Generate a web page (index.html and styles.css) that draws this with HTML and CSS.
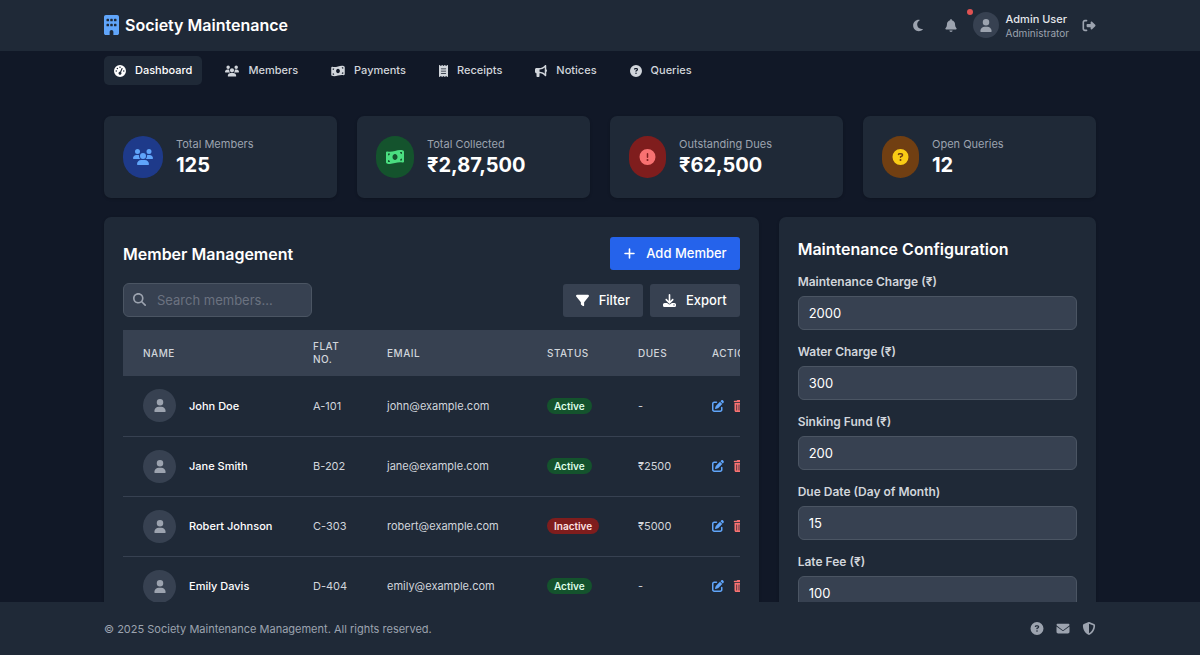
FILE: index.html
```html
<!DOCTYPE html>
<html lang="en">
  <head>
    <meta charset="UTF-8" />
    <meta name="viewport" content="width=device-width, initial-scale=1.0" />
    <title>Society Maintenance</title>
    <link rel="stylesheet" href="styles.css">
  </head>
  <body>
    <!-- Icon sprite -->
    <svg class="sprite" aria-hidden="true">
      <symbol id="i-building" viewBox="0 0 384 512"><path fill-rule="evenodd" d="M48 0C21.500 0 0 21.500 0 48V464c0 26.500 21.500 48 48 48h96V432c0-26.500 21.500-48 48-48s48 21.500 48 48v80h96c26.500 0 48-21.500 48-48V48c0-26.500-21.500-48-48-48H48zM80 96h32q16 0 16 16v32q0 16-16 16H80q-16 0-16-16v-32q0-16 16-16zM176 96h32q16 0 16 16v32q0 16-16 16h-32q-16 0-16-16v-32q0-16 16-16zM272 96h32q16 0 16 16v32q0 16-16 16h-32q-16 0-16-16v-32q0-16 16-16zM80 224h32q16 0 16 16v32q0 16-16 16H80q-16 0-16-16v-32q0-16 16-16zM176 224h32q16 0 16 16v32q0 16-16 16h-32q-16 0-16-16v-32q0-16 16-16zM272 224h32q16 0 16 16v32q0 16-16 16h-32q-16 0-16-16v-32q0-16 16-16z"/></symbol>
      <symbol id="i-moon" viewBox="0 0 384 512"><path d="M223.500 32C100 32 0 132.300 0 256S100 480 223.500 480c60.600 0 115.500-24.200 155.800-63.400c5-4.900 6.300-12.500 3.100-18.700s-10.100-9.700-17-8.500c-9.800 1.700-19.800 2.600-30.100 2.600c-96.900 0-175.500-78.800-175.500-176c0-65.800 36-123.100 89.300-153.300c6.100-3.500 9.200-10.500 7.700-17.300s-7.300-11.900-14.300-12.500c-6.300-.5-12.600-.8-19-.8z"/></symbol>
      <symbol id="i-bell" viewBox="0 0 448 512"><path d="M224 0c-17.700 0-32 14.300-32 32V51.200C119 66 64 130.600 64 208v18.800c0 47-17.300 92.400-48.500 127.600l-7.400 8.300c-8.400 9.400-10.400 22.900-5.300 34.400S19.400 416 32 416H416c12.600 0 24-7.400 29.200-18.900s3.100-25-5.300-34.400l-7.400-8.300C401.300 319.200 384 273.900 384 226.800V208c0-77.400-55-142-128-156.800V32c0-17.700-14.300-32-32-32zm45.300 493.300c12-12 18.700-28.300 18.700-45.300H160c0 17 6.700 33.300 18.700 45.300s28.300 18.700 45.300 18.700s33.300-6.700 45.300-18.700z"/></symbol>
      <symbol id="i-user" viewBox="0 0 448 512"><path d="M224 256A128 128 0 1 0 224 0a128 128 0 1 0 0 256zm-45.700 48C79.800 304 0 383.800 0 482.300C0 498.700 13.300 512 29.700 512H418.300c16.400 0 29.700-13.300 29.700-29.700C448 383.800 368.200 304 269.700 304H178.300z"/></symbol>
      <symbol id="i-logout" viewBox="0 0 512 512"><path d="M377.900 105.900L500.700 228.700c7.200 7.200 11.300 17.100 11.300 27.300s-4.100 20.100-11.300 27.300L377.900 406.100c-6.400 6.400-15 9.900-24 9.900c-18.700 0-33.900-15.200-33.900-33.900l0-62.100-128 0c-17.700 0-32-14.300-32-32l0-64c0-17.700 14.300-32 32-32l128 0 0-62.100c0-18.700 15.200-33.900 33.900-33.900c9 0 17.600 3.600 24 9.900zM160 96L96 96c-17.700 0-32 14.300-32 32l0 256c0 17.700 14.300 32 32 32l64 0c17.700 0 32 14.300 32 32s-14.300 32-32 32l-64 0c-53 0-96-43-96-96L0 128C0 75 43 32 96 32l64 0c17.700 0 32 14.300 32 32s-14.300 32-32 32z"/></symbol>
      <symbol id="i-gauge" viewBox="0 0 512 512"><path fill-rule="evenodd" d="M0 256a256 256 0 1 1 512 0A256 256 0 1 1 0 256zM288 96a32 32 0 1 0 -64 0 32 32 0 1 0 64 0zM256 416c35.300 0 64-28.700 64-64c0-17.400-6.900-33.100-18.100-44.600L366 161.700c5.300-12.100-.2-26.300-12.300-31.600s-26.300 .2-31.600 12.300L257.900 288c-.6 0-1.300 0-1.900 0c-35.300 0-64 28.700-64 64s28.700 64 64 64zM176 144a32 32 0 1 0 -64 0 32 32 0 1 0 64 0zM96 288a32 32 0 1 0 0-64 32 32 0 1 0 0 64zm352-32a32 32 0 1 0 -64 0 32 32 0 1 0 64 0z"/></symbol>
      <symbol id="i-users" viewBox="0 0 640 512"><path d="M144 0a80 80 0 1 1 0 160A80 80 0 1 1 144 0zM512 0a80 80 0 1 1 0 160A80 80 0 1 1 512 0zM0 298.700C0 239.800 47.800 192 106.700 192h42.700c15.900 0 31 3.500 44.600 9.700c-1.300 7.200-1.900 14.700-1.900 22.300c0 38.200 16.800 72.500 43.300 96H21.300C9.600 320 0 310.400 0 298.700zM404.600 320c26.600-23.500 43.300-57.800 43.300-96c0-7.600-.7-15-1.900-22.300c13.600-6.300 28.700-9.700 44.600-9.700h42.700C592.200 192 640 239.800 640 298.700c0 11.800-9.600 21.300-21.300 21.300H404.600zM224 224a96 96 0 1 1 192 0 96 96 0 1 1 -192 0zM128 485.300C128 411.700 187.700 352 261.300 352H378.700C452.300 352 512 411.700 512 485.300c0 14.700-11.900 26.700-26.700 26.700H154.700c-14.700 0-26.700-11.900-26.700-26.700z"/></symbol>
      <symbol id="i-money" viewBox="0 0 576 512"><path fill-rule="evenodd" d="M0 112.500V422.300c0 18 10.100 35 27 41.300c87 32.500 174 10.300 261-11.900c79.800-20.300 159.600-40.700 239.300-18.900c23 6.300 48.700-9.500 48.700-33.400V89.700c0-18-10.100-35-27-41.300C462 15.900 375 38.100 288 60.300C208.200 80.600 128.400 100.900 48.700 79.100C25.600 72.800 0 88.600 0 112.500zM288 352c-44.200 0-80-43-80-96s35.800-96 80-96s80 43 80 96s-35.800 96-80 96zM64 352c35.300 0 64 28.700 64 64H64V352zm64-208c0 35.300-28.700 64-64 64V144h64zM512 304v64H448c0-35.300 28.700-64 64-64zM448 96h64v64c-35.300 0-64-28.700-64-64z"/></symbol>
      <symbol id="i-receipt" viewBox="0 0 384 512"><path fill-rule="evenodd" d="M14 2.200C22.500-1.700 32.500-.3 39.600 5.800L80 40.400 120.400 5.800c9-7.700 22.300-7.700 31.200 0L192 40.400 232.400 5.800c9-7.700 22.300-7.700 31.200 0L304 40.400 344.400 5.800c7.100-6.100 17.100-7.500 25.600-3.600s14 12.400 14 21.800V488c0 9.400-5.500 17.900-14 21.800s-18.500 2.500-25.600-3.600L304 471.600l-40.400 34.600c-9 7.700-22.300 7.700-31.200 0L192 471.600l-40.400 34.600c-9 7.700-22.300 7.700-31.200 0L80 471.600 39.600 506.200c-7.100 6.100-17.100 7.500-25.600 3.600S0 497.400 0 488V24C0 14.600 5.500 6.100 14 2.200zM96 144c-8.800 0-16 7.200-16 16s7.200 16 16 16H288c8.800 0 16-7.200 16-16s-7.200-16-16-16H96zM96 240c-8.800 0-16 7.200-16 16s7.200 16 16 16H288c8.800 0 16-7.200 16-16s-7.200-16-16-16H96zM96 336c-8.800 0-16 7.200-16 16s7.200 16 16 16H288c8.800 0 16-7.200 16-16s-7.200-16-16-16H96z"/></symbol>
      <symbol id="i-bullhorn" viewBox="0 0 512 512"><path fill-rule="evenodd" d="M480 32c0-12.900-7.800-24.600-19.800-29.600s-25.700-2.200-34.900 6.900L381.700 53c-48 48-113.100 75-181 75H64c-35.300 0-64 28.700-64 64v96c0 35.300 28.700 64 64 64l0 128c0 17.700 14.300 32 32 32h64c17.700 0 32-14.300 32-32V352l8.700 0c67.900 0 133 27 181 75l43.600 43.600c9.200 9.200 22.900 11.900 34.900 6.900s19.800-16.600 19.800-29.600V300.400c18.600-8.800 32-32.500 32-60.400s-13.400-51.600-32-60.400V32zm-64 76.700V371.300C357.200 317.800 280.500 288 200.700 288H192V192h8.700c79.800 0 156.500-29.800 215.300-83.300z"/></symbol>
      <symbol id="i-question" viewBox="0 0 512 512"><path fill-rule="evenodd" d="M256 512A256 256 0 1 0 256 0a256 256 0 1 0 0 512zM169.800 165.300c7.900-22.300 29.100-37.300 52.800-37.300h58.300c34.900 0 63.100 28.300 63.100 63.100c0 22.600-12.100 43.500-31.700 54.800L280 264.400c-.2 13-10.900 23.600-24 23.600c-13.300 0-24-10.700-24-24V250.500c0-8.600 4.600-16.500 12.100-20.800l44.300-25.400c4.700-2.700 7.600-7.700 7.600-13.100c0-8.400-6.800-15.100-15.100-15.100H222.600c-3.400 0-6.400 2.100-7.500 5.300l-.4 1.200c-4.400 12.500-18.200 19-30.600 14.600s-19-18.200-14.600-30.600l.4-1.200zM224 352a32 32 0 1 1 64 0 32 32 0 1 1 -64 0z"/></symbol>
      <symbol id="i-alert" viewBox="0 0 512 512"><path fill-rule="evenodd" d="M256 512A256 256 0 1 0 256 0a256 256 0 1 0 0 512zm0-384c13.300 0 24 10.700 24 24V264c0 13.300-10.700 24-24 24s-24-10.700-24-24V152c0-13.300 10.700-24 24-24zM224 352a32 32 0 1 1 64 0 32 32 0 1 1 -64 0z"/></symbol>
      <symbol id="i-plus" viewBox="0 0 448 512"><path d="M256 80c0-17.700-14.300-32-32-32s-32 14.300-32 32V224H48c-17.700 0-32 14.300-32 32s14.300 32 32 32H192V432c0 17.700 14.300 32 32 32s32-14.300 32-32V288H400c17.700 0 32-14.300 32-32s-14.300-32-32-32H256V80z"/></symbol>
      <symbol id="i-search" viewBox="0 0 512 512"><path fill-rule="evenodd" d="M416 208c0 45.900-14.900 88.300-40 122.700L502.600 457.400c12.500 12.500 12.500 32.800 0 45.300s-32.800 12.500-45.300 0L330.700 376c-34.400 25.200-76.800 40-122.700 40C93.100 416 0 322.900 0 208S93.100 0 208 0S416 93.100 416 208zM208 352a144 144 0 1 0 0-288 144 144 0 1 0 0 288z"/></symbol>
      <symbol id="i-filter" viewBox="0 0 512 512"><path d="M3.900 54.900C10.500 40.900 24.500 32 40 32H472c15.500 0 29.500 8.900 36.100 22.900s4.600 30.500-5.200 42.500L320 320.900V448c0 12.100-6.800 23.200-17.700 28.600s-23.800 4.300-33.500-3l-64-48c-8.100-6-12.800-15.500-12.800-25.600V320.900L9 97.300C-.7 85.400-2.800 68.800 3.900 54.900z"/></symbol>
      <symbol id="i-download" viewBox="0 0 512 512"><path fill-rule="evenodd" d="M288 32c0-17.700-14.300-32-32-32s-32 14.300-32 32V274.700l-73.400-73.400c-12.500-12.500-32.800-12.500-45.300 0s-12.500 32.800 0 45.300l128 128c12.500 12.500 32.800 12.500 45.300 0l128-128c12.500-12.500 12.500-32.800 0-45.300s-32.800-12.500-45.300 0L288 274.700V32zM64 352c-35.300 0-64 28.700-64 64v32c0 35.300 28.700 64 64 64H448c35.300 0 64-28.700 64-64V416c0-35.300-28.700-64-64-64H346.500l-45.300 45.300c-25 25-65.500 25-90.500 0L165.500 352H64zm368 56a24 24 0 1 1 0 48 24 24 0 1 1 0-48z"/></symbol>
      <symbol id="i-edit" viewBox="0 0 512 512"><path d="M471.600 21.700c-21.900-21.900-57.300-21.900-79.200 0L362.300 51.700l97.900 97.900 30.100-30.100c21.900-21.900 21.900-57.300 0-79.200L471.600 21.700zm-299.200 220c-6.100 6.100-10.800 13.600-13.500 21.900l-29.600 88.800c-2.900 8.600-.6 18.100 5.800 24.600s15.900 8.700 24.600 5.800l88.800-29.600c8.200-2.700 15.700-7.400 21.900-13.500L437.700 172.300 339.700 74.300 172.400 241.700zM96 64C43 64 0 107 0 160V416c0 53 43 96 96 96H352c53 0 96-43 96-96V320c0-17.700-14.300-32-32-32s-32 14.300-32 32v96c0 17.700-14.300 32-32 32H96c-17.700 0-32-14.300-32-32V160c0-17.700 14.300-32 32-32h96c17.700 0 32-14.300 32-32s-14.300-32-32-32H96z"/></symbol>
      <symbol id="i-trash" viewBox="0 0 448 512"><path fill-rule="evenodd" d="M135.200 17.700C140.600 6.800 151.700 0 163.800 0H284.200c12.100 0 23.200 6.800 28.600 17.700L320 32h96c17.700 0 32 14.300 32 32s-14.300 32-32 32H32C14.300 96 0 81.700 0 64S14.300 32 32 32h96l7.200-14.300zM32 128H416V448c0 35.300-28.700 64-64 64H96c-35.300 0-64-28.700-64-64V128zm96 64c-8.800 0-16 7.200-16 16V432c0 8.800 7.200 16 16 16s16-7.200 16-16V208c0-8.800-7.200-16-16-16zm96 0c-8.800 0-16 7.200-16 16V432c0 8.800 7.200 16 16 16s16-7.200 16-16V208c0-8.800-7.200-16-16-16zm96 0c-8.800 0-16 7.200-16 16V432c0 8.800 7.200 16 16 16s16-7.200 16-16V208c0-8.800-7.200-16-16-16z"/></symbol>
      <symbol id="i-envelope" viewBox="0 0 512 512"><path d="M48 64C21.500 64 0 85.500 0 112c0 15.100 7.100 29.300 19.200 38.400L236.800 313.600c11.400 8.500 27 8.500 38.400 0L492.800 150.400c12.100-9.100 19.200-23.300 19.200-38.400c0-26.500-21.500-48-48-48H48zM0 176V384c0 35.300 28.700 64 64 64H448c35.300 0 64-28.700 64-64V176L294.400 339.200c-22.800 17.100-54 17.100-76.800 0L0 176z"/></symbol>
      <symbol id="i-shield" viewBox="0 0 512 512"><path fill-rule="evenodd" d="M256 0c4.600 0 9.200 1 13.400 2.900L457.700 82.800c22 9.300 38.400 31 38.300 57.200c-.5 99.200-41.300 280.700-213.600 363.200c-16.700 8-36.100 8-52.800 0C57.300 420.700 16.500 239.200 16 140c-.1-26.200 16.300-47.900 38.300-57.200L242.700 2.900C246.800 1 251.400 0 256 0zm0 66.800V444.800C394 378 431.100 230.100 432 141.400L256 66.800z"/></symbol>
    </svg>

    <header class="header">
      <div class="container header-inner">
        <div class="brand">
          <svg class="brand-icon"><use href="#i-building"/></svg>
          <h1>Society Maintenance</h1>
        </div>
        <div class="header-actions">
          <button class="icon-button" aria-label="Toggle theme"><svg class="icon narrow"><use href="#i-moon"/></svg></button>
          <button class="icon-button bell" aria-label="Notifications"><svg class="icon"><use href="#i-bell"/></svg><span class="bell-dot"></span></button>
          <div class="profile">
            <span class="avatar avatar-small"><svg class="icon"><use href="#i-user"/></svg></span>
            <div>
              <p class="profile-name">Admin User</p>
              <p class="profile-role">Administrator</p>
            </div>
          </div>
          <button class="logout" aria-label="Log out"><svg class="icon"><use href="#i-logout"/></svg></button>
        </div>
      </div>
    </header>

    <main class="main">
      <div class="container">
        <nav class="nav" aria-label="Main">
          <a class="nav-link active" href="#dashboard"><svg class="nav-icon"><use href="#i-gauge"/></svg>Dashboard</a>
          <a class="nav-link" href="#members"><svg class="nav-icon wide"><use href="#i-users"/></svg>Members</a>
          <a class="nav-link" href="#payments"><svg class="nav-icon wide"><use href="#i-money"/></svg>Payments</a>
          <a class="nav-link" href="#receipts"><svg class="nav-icon thin"><use href="#i-receipt"/></svg>Receipts</a>
          <a class="nav-link" href="#notices"><svg class="nav-icon"><use href="#i-bullhorn"/></svg>Notices</a>
          <a class="nav-link" href="#queries"><svg class="nav-icon"><use href="#i-question"/></svg>Queries</a>
        </nav>

        <!-- Stats -->
        <section class="stats">
          <div class="card stat">
            <span class="stat-icon blue"><svg class="users"><use href="#i-users"/></svg></span>
            <div><p class="stat-label">Total Members</p><p class="stat-value">125</p></div>
          </div>
          <div class="card stat">
            <span class="stat-icon green"><svg class="money"><use href="#i-money"/></svg></span>
            <div><p class="stat-label">Total Collected</p><p class="stat-value">₹2,87,500</p></div>
          </div>
          <div class="card stat">
            <span class="stat-icon red"><svg><use href="#i-alert"/></svg></span>
            <div><p class="stat-label">Outstanding Dues</p><p class="stat-value">₹62,500</p></div>
          </div>
          <div class="card stat">
            <span class="stat-icon yellow"><svg><use href="#i-question"/></svg></span>
            <div><p class="stat-label">Open Queries</p><p class="stat-value">12</p></div>
          </div>
        </section>

        <div class="panels">
          <!-- Members -->
          <section class="card panel-wide">
            <div class="panel-head">
              <h2>Member Management</h2>
              <button class="button primary"><svg class="button-icon"><use href="#i-plus"/></svg>Add Member</button>
            </div>
            <div class="toolbar">
              <div class="search">
                <svg class="search-icon"><use href="#i-search"/></svg>
                <input class="field" type="text" placeholder="Search members..." aria-label="Search members">
              </div>
              <div class="toolbar-buttons">
                <button class="button"><svg class="button-icon"><use href="#i-filter"/></svg>Filter</button>
                <button class="button"><svg class="button-icon"><use href="#i-download"/></svg>Export</button>
              </div>
            </div>
            <div class="table-wrap">
              <table class="members">
                <colgroup>
                  <col class="col-name"><col class="col-flat"><col class="col-email"><col class="col-status"><col class="col-dues"><col class="col-actions">
                </colgroup>
                <thead>
                  <tr><th>Name</th><th>Flat No.</th><th>Email</th><th>Status</th><th>Dues</th><th>Actions</th></tr>
                </thead>
                <tbody>
                  <tr>
                    <td><div class="member"><span class="avatar"><svg class="icon"><use href="#i-user"/></svg></span>John Doe</div></td>
                    <td>A-101</td><td>john@example.com</td>
                    <td><span class="badge">Active</span></td><td>-</td>
                    <td><div class="row-actions"><button class="edit" aria-label="Edit"><svg><use href="#i-edit"/></svg></button><button class="delete" aria-label="Delete"><svg><use href="#i-trash"/></svg></button></div></td>
                  </tr>
                  <tr>
                    <td><div class="member"><span class="avatar"><svg class="icon"><use href="#i-user"/></svg></span>Jane Smith</div></td>
                    <td>B-202</td><td>jane@example.com</td>
                    <td><span class="badge">Active</span></td><td>₹2500</td>
                    <td><div class="row-actions"><button class="edit" aria-label="Edit"><svg><use href="#i-edit"/></svg></button><button class="delete" aria-label="Delete"><svg><use href="#i-trash"/></svg></button></div></td>
                  </tr>
                  <tr>
                    <td><div class="member"><span class="avatar"><svg class="icon"><use href="#i-user"/></svg></span>Robert Johnson</div></td>
                    <td>C-303</td><td>robert@example.com</td>
                    <td><span class="badge inactive">Inactive</span></td><td>₹5000</td>
                    <td><div class="row-actions"><button class="edit" aria-label="Edit"><svg><use href="#i-edit"/></svg></button><button class="delete" aria-label="Delete"><svg><use href="#i-trash"/></svg></button></div></td>
                  </tr>
                  <tr>
                    <td><div class="member"><span class="avatar"><svg class="icon"><use href="#i-user"/></svg></span>Emily Davis</div></td>
                    <td>D-404</td><td>emily@example.com</td>
                    <td><span class="badge">Active</span></td><td>-</td>
                    <td><div class="row-actions"><button class="edit" aria-label="Edit"><svg><use href="#i-edit"/></svg></button><button class="delete" aria-label="Delete"><svg><use href="#i-trash"/></svg></button></div></td>
                  </tr>
                </tbody>
              </table>
            </div>
          </section>

          <!-- Configuration -->
          <section class="card">
            <h2>Maintenance Configuration</h2>
            <form class="config">
              <div class="form-group"><label for="charge">Maintenance Charge (₹)</label><input class="field" id="charge" type="text" value="2000"></div>
              <div class="form-group"><label for="water">Water Charge (₹)</label><input class="field" id="water" type="text" value="300"></div>
              <div class="form-group"><label for="sinking">Sinking Fund (₹)</label><input class="field" id="sinking" type="text" value="200"></div>
              <div class="form-group"><label for="due">Due Date (Day of Month)</label><input class="field" id="due" type="text" value="15"></div>
              <div class="form-group"><label for="late">Late Fee (₹)</label><input class="field" id="late" type="text" value="100"></div>
            </form>
          </section>
        </div>
      </div>
    </main>

    <footer class="footer">
      <div class="container footer-inner">
        <p>© 2025 Society Maintenance Management. All rights reserved.</p>
        <div class="footer-links">
          <a href="#help" aria-label="Help"><svg class="icon"><use href="#i-question"/></svg></a>
          <a href="#contact" aria-label="Contact"><svg class="icon"><use href="#i-envelope"/></svg></a>
          <a href="#privacy" aria-label="Privacy"><svg class="icon"><use href="#i-shield"/></svg></a>
        </div>
      </div>
    </footer>
  </body>
</html>
```

FILE: styles.css
```css
/* Reset */
* {
  margin: 0;
  padding: 0;
  box-sizing: border-box;
}

body {
  display: flex;
  flex-direction: column;
  height: 100vh;
  background-color: #111827;
  color: #d1d5db;
  font-family: Inter, "Liberation Sans", sans-serif;
  font-size: 11px;
  line-height: 16px;
}

button,
input {
  font: inherit;
  color: inherit;
}

button {
  border: none;
  background: none;
  cursor: pointer;
}

a {
  color: inherit;
  text-decoration: none;
}

svg {
  display: block;
  fill: currentColor;
}

h1,
h2 {
  font-size: 16px;
  line-height: 24px;
  font-weight: 600;
  color: white;
}

.sprite {
  display: none;
}

.container {
  width: 100%;
  max-width: 1024px;
  margin: 0 auto;
  padding: 0 16px;
}

.icon {
  width: 14px;
  height: 13px;
}

.icon.narrow {
  width: 10px;
}

/* Header */
.header {
  background-color: #1f2937;
  border-bottom: 1px solid #1f2937;
}

.header-inner {
  display: flex;
  justify-content: space-between;
  align-items: center;
  height: 50px;
}

.brand {
  display: flex;
  align-items: center;
  gap: 6px;
}

.brand-icon {
  width: 15px;
  height: 20px;
  color: #60a5fa;
}

.header-actions {
  display: flex;
  align-items: center;
  color: #9ca3af;
}

.icon-button {
  padding: 6px;
}

.logout {
  padding: 6px 0 6px 13px;
}

.bell {
  position: relative;
  margin: 0 9px;
}

.bell-dot {
  position: absolute;
  top: -4px;
  right: -9px;
  width: 6px;
  height: 6px;
  border-radius: 50%;
  background-color: #e05252;
}

.profile {
  display: flex;
  align-items: center;
  gap: 7px;
}

.profile-name {
  font-weight: 500;
  line-height: 16px;
  color: #e5e7eb;
}

.profile-role {
  font-size: 10px;
  line-height: 13px;
}

.avatar {
  display: flex;
  flex: none;
  justify-content: center;
  align-items: center;
  width: 33px;
  height: 33px;
  border-radius: 50%;
  background-color: #374151;
  color: #9ca3af;
}

.avatar-small {
  width: 26px;
  height: 26px;
}

/* Main */
.main {
  flex: 1;
  min-height: 0;
  overflow-y: auto;
  scrollbar-width: none;
}

.nav {
  display: flex;
  gap: 13px;
  padding: 5px 0 31px;
}

.nav-link {
  display: flex;
  align-items: center;
  gap: 9px;
  padding: 6px 10px;
  border-radius: 5px;
  line-height: 17px;
  font-weight: 500;
}

.nav-link.active {
  background-color: #1f2937;
  color: white;
}

.nav-icon {
  width: 12px;
  height: 12px;
}

.nav-icon.wide {
  width: 14px;
}

.nav-icon.thin {
  width: 9px;
}

.card {
  min-width: 0;
  padding: 20px 19px;
  border-radius: 7px;
  background-color: #1f2937;
  box-shadow: 0 1px 3px rgba(0, 0, 0, 0.2);
}

/* Stats */
.stats {
  display: grid;
  grid-template-columns: repeat(4, 1fr);
  gap: 20px;
  margin-bottom: 19px;
}

.stat {
  display: flex;
  align-items: center;
  gap: 13px;
}

.stat-icon {
  padding: 13px 10px;
  border-radius: 999px;
}

.stat-icon svg {
  width: 17px;
  height: 16px;
}

.stat-icon .users {
  width: 20px;
}

.stat-icon .money {
  width: 18px;
}

.blue {
  background-color: #1e3a8a;
  color: #60a5fa;
}

.green {
  background-color: #14532d;
  color: #4ade80;
}

.red {
  background-color: #7f1d1d;
  color: #f87171;
}

.yellow {
  background-color: #713f12;
  color: #facc15;
}

.stat-label {
  color: #9ca3af;
}

.stat-value {
  font-size: 20px;
  line-height: 26px;
  font-weight: 700;
  color: white;
}

/* Panels */
.panels {
  display: grid;
  grid-template-columns: repeat(3, 1fr);
  gap: 20px;
  padding-bottom: 20px;
}

.panel-wide {
  grid-column: span 2;
}

.panel-head,
.toolbar {
  display: flex;
  justify-content: space-between;
  align-items: center;
  margin-bottom: 13px;
}

.button {
  display: flex;
  align-items: center;
  gap: 10px;
  padding: 8px 13px;
  border-radius: 3px;
  background-color: #374151;
  color: white;
  font-size: 13px;
  line-height: 17px;
  font-weight: 500;
}

.button.primary {
  background-color: #2563eb;
}

.button-icon {
  width: 13px;
  height: 13px;
}

.toolbar-buttons {
  display: flex;
  gap: 7px;
}

.field {
  display: block;
  width: 100%;
  height: 34px;
  padding: 0 10px;
  border: 1px solid #4b5563;
  border-radius: 6px;
  background-color: #374151;
  color: white;
  font-size: 13px;
}

.search {
  position: relative;
}

.search .field {
  width: 189px;
  padding-left: 33px;
}

.field::placeholder {
  color: #6b7280;
}

.search-icon {
  position: absolute;
  top: 10px;
  left: 10px;
  width: 13px;
  height: 13px;
  color: #9ca3af;
}

/* Table */
.table-wrap {
  overflow-x: auto;
  scrollbar-width: none;
}

.members {
  width: 100%;
  min-width: 690px;
  table-layout: fixed;
  border-collapse: collapse;
}

.col-name {
  width: 170px;
}

.col-flat,
.col-dues {
  width: 74px;
}

.col-email {
  width: 160px;
}

.col-status {
  width: 91px;
}

.members th,
.members td {
  padding: 0 20px;
  text-align: left;
  white-space: nowrap;
}

.members th {
  height: 46px;
  background-color: #374151;
  font-size: 10px;
  line-height: 13px;
  font-weight: 500;
  letter-spacing: 0.05em;
  text-transform: uppercase;
  white-space: normal;
}

.members td {
  height: 60px;
  border-bottom: 1px solid #374151;
}

.member {
  display: flex;
  align-items: center;
  gap: 13px;
  color: white;
  font-weight: 500;
}

.badge {
  display: inline-block;
  padding: 0 7px;
  border-radius: 999px;
  background-color: #14532d;
  color: #dcfce7;
  font-size: 10px;
  line-height: 16px;
  font-weight: 600;
}

.badge.inactive {
  background-color: #7f1d1d;
  color: #fee2e2;
}

.row-actions {
  display: flex;
  gap: 9px;
}

.row-actions svg {
  width: 12px;
  height: 12px;
}

.edit {
  color: #60a5fa;
}

.delete {
  color: #f87171;
}

/* Configuration form */
.config {
  display: flex;
  flex-direction: column;
  gap: 13px;
  padding-top: 12px;
}

.form-group label {
  display: block;
  margin-bottom: 6px;
  font-size: 12px;
  line-height: 17px;
  font-weight: 600;
}

/* Footer */
.footer {
  background-color: #1f2937;
  color: #9ca3af;
}

.footer-inner {
  display: flex;
  justify-content: space-between;
  align-items: center;
  height: 53px;
}

.footer-links {
  display: flex;
  gap: 12px;
}
```
